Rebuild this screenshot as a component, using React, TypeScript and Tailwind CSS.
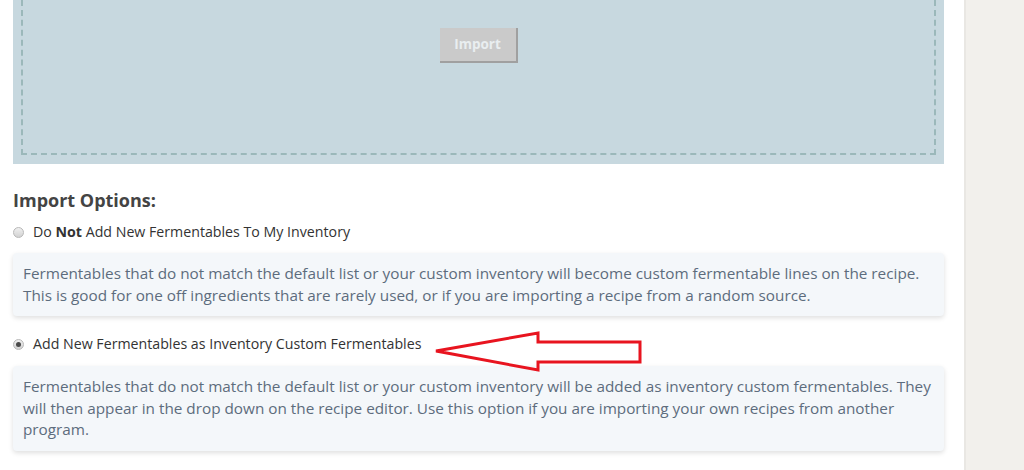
const font = { fontFamily: '"Open Sans", "Liberation Sans", sans-serif' };

function Radio({ checked }: { checked?: boolean }) {
  return (
    <span className="grid size-[11px] shrink-0 place-items-center rounded-full border border-[#b8b8b8] bg-gradient-to-b from-[#f0f0f0] to-[#d2d2d2]">
      {checked && <span className="size-[5px] rounded-full bg-[#4a4a4a]" />}
    </span>
  );
}

function Note({ children }: { children: React.ReactNode }) {
  return (
    <div className="rounded-[4px] bg-[#f4f7fa] px-[10px] py-[10px] text-[15.3px] leading-[21.5px] text-[#5d6c7d] shadow-[0_2px_5px_rgba(0,0,0,0.13)]">
      {children}
    </div>
  );
}

export default function App() {
  return (
    <div className="relative flex h-[470px] w-[1024px] overflow-hidden bg-white" style={font}>
      {/* Main column */}
      <div className="w-[964px] shrink-0 pl-[13px] pr-[20px]">
        {/* Drop zone */}
        <div className="h-[164px] bg-[#c7d8df] px-[8px] pb-[9px]">
          <div className="flex h-full justify-center border-x-2 border-b-2 border-dashed border-[#9bb8ba] pt-[28px]">
            <button className="ml-[0px] h-[35px] w-[78px] border-r-2 border-b-2 border-[#a0a0a0] bg-[#cacaca] text-[13.5px] font-bold text-[#e9eef0]">
              Import
            </button>
          </div>
        </div>

        <h3 className="mt-[24px] text-[18px] leading-[24px] font-bold text-[#444]">Import Options:</h3>

        <label className="mt-[10px] flex h-[20px] items-center gap-[9px] text-[14.2px] text-[#333]">
          <Radio />
          <span>
            Do <b className="font-bold">Not</b> Add New Fermentables To My Inventory
          </span>
        </label>
        <div className="mt-[11px]">
          <Note>
            Fermentables that do not match the default list or your custom inventory will become custom fermentable lines on the recipe.
            This is good for one off ingredients that are rarely used, or if you are importing a recipe from a random source.
          </Note>
        </div>

        <label className="mt-[18px] flex h-[20px] items-center gap-[9px] text-[14.2px] text-[#333]">
          <Radio checked />
          <span>Add New Fermentables as Inventory Custom Fermentables</span>
        </label>
        <div className="mt-[12px]">
          <Note>
            Fermentables that do not match the default list or your custom inventory will be added as inventory custom fermentables. They
            will then appear in the drop down on the recipe editor. Use this option if you are importing your own recipes from another
            program.
          </Note>
        </div>
      </div>

      {/* Sidebar */}
      <div className="flex-1 border-l-2 border-[#e9e7e3] bg-[#f2f0ec]" />

      {/* Annotation arrow */}
      <svg className="absolute left-[430px] top-[327px]" width="216" height="50" viewBox="430 327 216 50">
        <polygon
          points="436,351 538,333 538,342 640,342 640,362 538,362 538,370"
          fill="none"
          stroke="#e8141f"
          strokeWidth="3"
          strokeLinejoin="miter"
        />
      </svg>
    </div>
  );
}
